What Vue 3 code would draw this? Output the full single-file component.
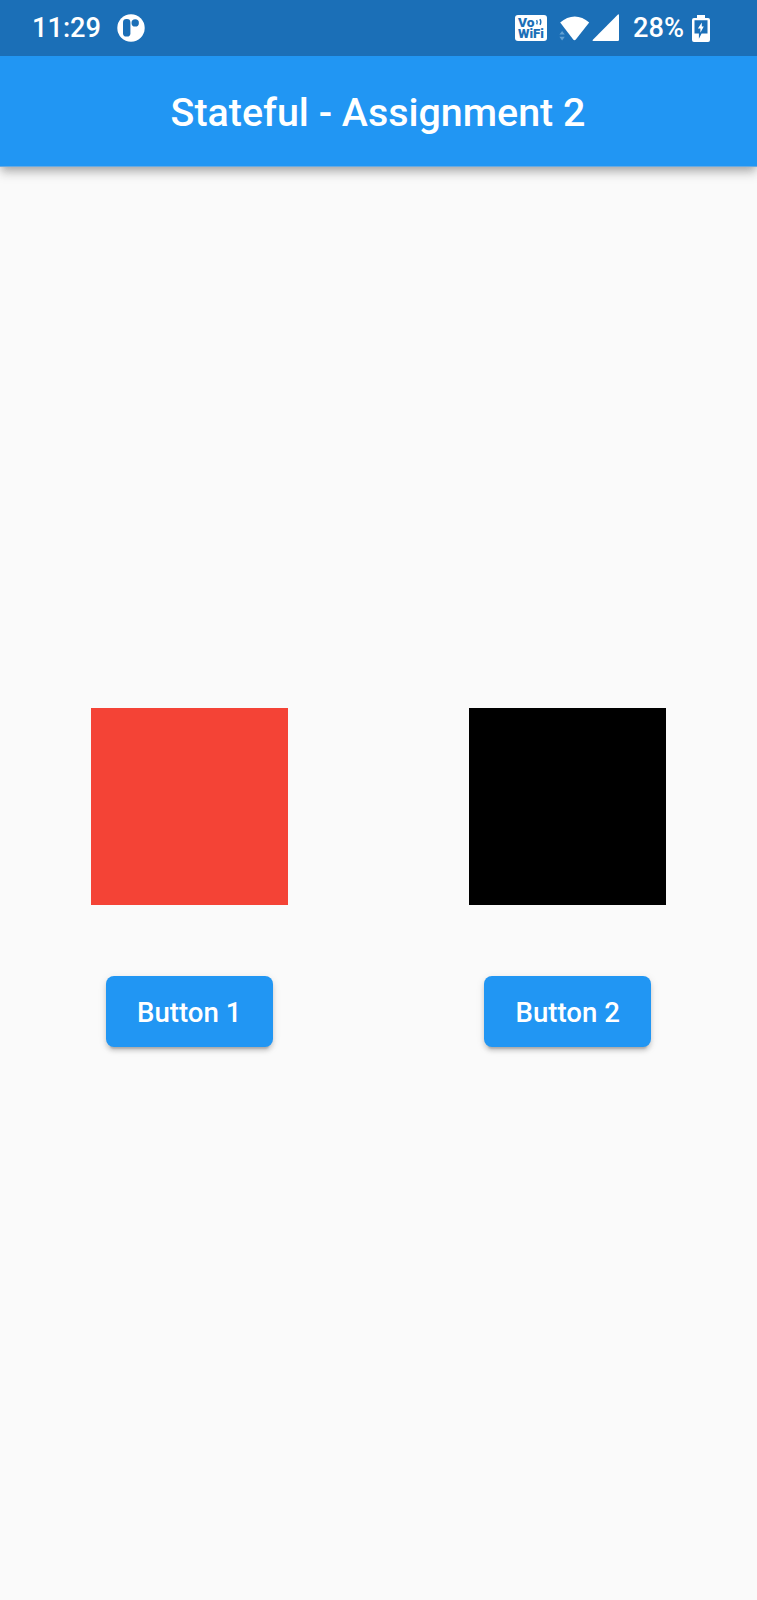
<script setup>
const panels = [
  { label: 'Button 1', tone: 'red' },
  { label: 'Button 2', tone: 'black' },
]
</script>

<template>
  <div class="screen">
    <header class="status-bar">
      <div class="status-left">
        <span class="clock">11:29</span>
        <svg class="app-icon" viewBox="0 0 28 28">
          <circle cx="14" cy="14" r="13.7" fill="#fff" />
          <rect x="6" y="5" width="7.4" height="17.6" rx="3.4" fill="#1b6fb7" />
          <circle cx="18.2" cy="8.9" r="3.7" fill="#1b6fb7" />
        </svg>
      </div>
      <div class="status-right">
        <svg class="vowifi" viewBox="0 0 32 26">
          <rect width="32" height="26" rx="3" fill="#fff" />
          <g fill="#1b6fb7" font-family="Roboto, sans-serif" font-weight="900" font-size="12.3">
            <text x="3" y="12" textLength="16.5" lengthAdjust="spacingAndGlyphs">Vo</text>
            <text x="3" y="23" textLength="26" lengthAdjust="spacingAndGlyphs">WiFi</text>
          </g>
          <path d="M21.6 5.2q1.2 2 .1 4.2M24.9 4.2q1.8 2.8 .1 5.6" fill="none" stroke="#1b6fb7" stroke-width="1.4" />
        </svg>
        <svg class="wifi" viewBox="0 0 31 26">
          <path d="M1.2 6.6C10-1.4 21.5-1.4 30.2 6.6L16.8 23.5Q15.5 25 14.2 23.5Z" fill="#fff" />
          <path d="M.4 18.4L3.1 15L5.8 18.4ZM.4 20.8L3.1 24.6L5.8 20.8Z" fill="#61a0d3" />
        </svg>
        <svg class="signal" viewBox="0 0 28 28">
          <path d="M25.7 .8Q27 -.4 27 1.3V25.8Q27 27 25.8 27H1.4Q-.2 27 .9 25.8Z" fill="#fff" />
        </svg>
        <span class="percent">28%</span>
        <svg class="battery" viewBox="0 0 18 27">
          <path d="M5 0h8v3h3q2 0 2 2v20q0 2-2 2H2q-2 0-2-2V5q0-2 2-2h3Z" fill="#fff" />
          <path d="M2.5 5.3h13V18.5H9.6L6.9 23.8V18.5H2.5Z" fill="#1b6fb7" />
          <path d="M9.8 7.6L5.9 13.6h2.5v4.2L11.8 11.6H9.8Z" fill="#fff" />
        </svg>
      </div>
    </header>
    <div class="app-bar"><h1>Stateful - Assignment 2</h1></div>
    <main>
      <section v-for="panel in panels" :key="panel.label">
        <div class="box" :class="panel.tone"></div>
        <button type="button">{{ panel.label }}</button>
      </section>
    </main>
  </div>
</template>

<style>
body { margin: 0; }
</style>

<style scoped>
.screen {
  display: flex;
  flex-direction: column;
  width: 100%;
  height: 1600px;
  background: #fafafa;
  font-family: Roboto, sans-serif;
  overflow: hidden;
}
.status-bar {
  position: relative;
  z-index: 1;
  display: flex;
  justify-content: space-between;
  box-sizing: border-box;
  flex: 0 0 56px;
  padding: 0 47px 0 32px;
  background: #1b6fb7;
  color: #fff;
  font-size: 27.2px;
  font-weight: 500;
  line-height: 56px;
}
.status-left, .status-right { display: flex; align-items: flex-start; }
svg { display: block; flex: none; }
.clock { width: 68px; white-space: nowrap; }
.app-icon { width: 28px; height: 28px; margin: 14px 0 0 16.5px; }
.vowifi { width: 32px; height: 26px; margin-top: 15px; }
.wifi { width: 31px; height: 26px; margin: 16px 0 0 12px; }
.signal { width: 28px; height: 28px; margin: 14px 0 0 2px; }
.percent { width: 52px; margin-left: 13px; white-space: nowrap; }
.battery { width: 18px; height: 27px; margin: 14.5px 0 0 7px; }
.app-bar {
  display: flex;
  box-sizing: border-box;
  flex: 0 0 111px;
  align-items: center;
  justify-content: center;
  border-bottom: 1px solid #6aaae0;
  background: #2196f3;
  color: #fff;
  box-shadow: 0 4px 8px -2px rgba(0, 0, 0, .2), 0 8px 10px rgba(0, 0, 0, .1), 0 2px 12px rgba(0, 0, 0, .12);
}
h1 { margin: 4px 1px 0 0; font-size: 39.4px; font-weight: 500; line-height: 46px; white-space: nowrap; }
main { display: flex; flex: 1; align-items: center; padding-bottom: 12px; }
section { display: flex; flex: 1; flex-direction: column; align-items: center; gap: 70.5px; }
.box { width: 197.1px; height: 197.1px; }
.red { background: #f44336; }
.black { background: #000; }
button {
  width: 167.4px;
  height: 71px;
  padding: 2px 0 0;
  border: 0;
  border-radius: 8px;
  background: #2196f3;
  color: #fff;
  font: 500 27.6px/69px Roboto, sans-serif;
  box-shadow: 0 6px 2px -4px rgba(0, 0, 0, .16), 0 4px 4px rgba(0, 0, 0, .13), 0 2px 8px rgba(0, 0, 0, .1);
}
</style>
